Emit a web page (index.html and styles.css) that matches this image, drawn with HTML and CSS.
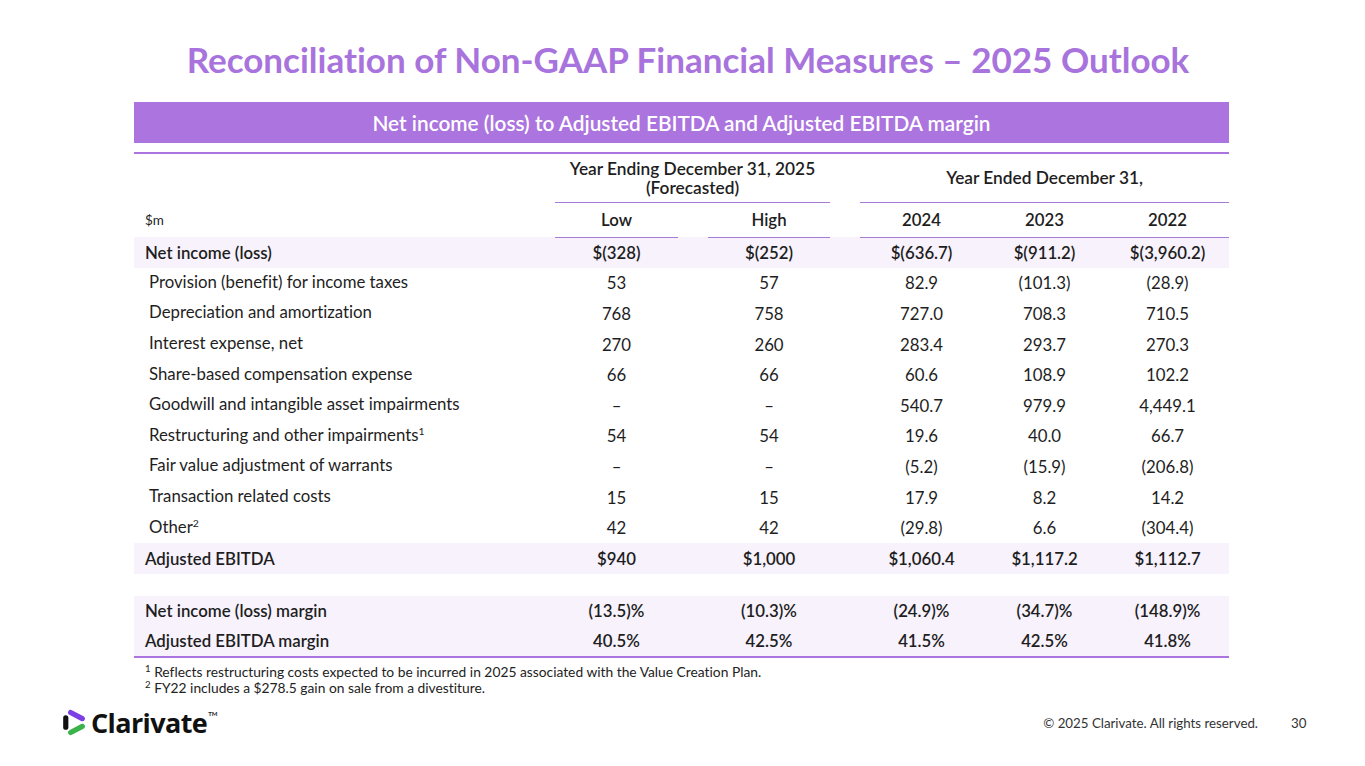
FILE: index.html
```html
<!DOCTYPE html>
<html lang="en">
<head>
<meta charset="utf-8">
<title>Reconciliation of Non-GAAP Financial Measures – 2025 Outlook</title>
<link rel="stylesheet" href="styles.css">
</head>
<body>
<div class="slide">
  <h1 class="title">Reconciliation of Non-GAAP Financial Measures – 2025 Outlook</h1>
  <section class="panel">
    <div class="bar">Net income (loss) to Adjusted EBITDA and Adjusted EBITDA margin</div>
    <table class="recon">
      <colgroup>
        <col class="c-label"><col class="c-num"><col class="c-gap"><col class="c-num2"><col class="c-gap"><col class="c-num"><col class="c-num"><col class="c-num">
      </colgroup>
      <thead>
        <tr class="h1">
          <th></th>
          <th colspan="3" class="grp">Year Ending December 31, 2025<br>(Forecasted)</th>
          <th></th>
          <th colspan="3" class="grp">Year Ended December 31,</th>
        </tr>
        <tr class="h2">
          <th class="unit">$m</th>
          <th class="yr">Low</th>
          <th></th>
          <th class="yr">High</th>
          <th></th>
          <th class="yr">2024</th>
          <th class="yr">2023</th>
          <th class="yr">2022</th>
        </tr>
      </thead>
      <tbody>
        <tr class="shade strong"><td class="lbl">Net income (loss)</td><td>$(328)</td><td></td><td>$(252)</td><td></td><td>$(636.7)</td><td>$(911.2)</td><td>$(3,960.2)</td></tr>
        <tr><td class="lbl sub">Provision (benefit) for income taxes</td><td>53</td><td></td><td>57</td><td></td><td>82.9</td><td>(101.3)</td><td>(28.9)</td></tr>
        <tr><td class="lbl sub">Depreciation and amortization</td><td>768</td><td></td><td>758</td><td></td><td>727.0</td><td>708.3</td><td>710.5</td></tr>
        <tr><td class="lbl sub">Interest expense, net</td><td>270</td><td></td><td>260</td><td></td><td>283.4</td><td>293.7</td><td>270.3</td></tr>
        <tr><td class="lbl sub">Share-based compensation expense</td><td>66</td><td></td><td>66</td><td></td><td>60.6</td><td>108.9</td><td>102.2</td></tr>
        <tr><td class="lbl sub">Goodwill and intangible asset impairments</td><td>–</td><td></td><td>–</td><td></td><td>540.7</td><td>979.9</td><td>4,449.1</td></tr>
        <tr><td class="lbl sub">Restructuring and other impairments<sup>1</sup></td><td>54</td><td></td><td>54</td><td></td><td>19.6</td><td>40.0</td><td>66.7</td></tr>
        <tr><td class="lbl sub">Fair value adjustment of warrants</td><td>–</td><td></td><td>–</td><td></td><td>(5.2)</td><td>(15.9)</td><td>(206.8)</td></tr>
        <tr><td class="lbl sub">Transaction related costs</td><td>15</td><td></td><td>15</td><td></td><td>17.9</td><td>8.2</td><td>14.2</td></tr>
        <tr><td class="lbl sub">Other<sup>2</sup></td><td>42</td><td></td><td>42</td><td></td><td>(29.8)</td><td>6.6</td><td>(304.4)</td></tr>
        <tr class="shade strong"><td class="lbl">Adjusted EBITDA</td><td>$940</td><td></td><td>$1,000</td><td></td><td>$1,060.4</td><td>$1,117.2</td><td>$1,112.7</td></tr>
        <tr class="spacer"><td colspan="8"></td></tr>
        <tr class="shade strong"><td class="lbl">Net income (loss) margin</td><td>(13.5)%</td><td></td><td>(10.3)%</td><td></td><td>(24.9)%</td><td>(34.7)%</td><td>(148.9)%</td></tr>
        <tr class="shade strong last"><td class="lbl">Adjusted EBITDA margin</td><td>40.5%</td><td></td><td>42.5%</td><td></td><td>41.5%</td><td>42.5%</td><td>41.8%</td></tr>
      </tbody>
    </table>
    <div class="notes">
      <p><sup>1</sup> Reflects restructuring costs expected to be incurred in 2025 associated with the Value Creation Plan.</p>
      <p><sup>2</sup> FY22 includes a $278.5 gain on sale from a divestiture.</p>
    </div>
  </section>
  <footer class="footer">
    <div class="logo">
      <svg class="logo-mark" viewBox="0 0 24 26" width="25" height="27" aria-hidden="true">
        <path d="M3.6 8.5 L3.6 17.5" stroke="#111" stroke-width="5" stroke-linecap="round" fill="none"/>
        <path d="M8.3 3.3 L19.5 9.3" stroke="#7b3fe4" stroke-width="5" stroke-linecap="round" fill="none"/>
        <path d="M8.3 22.7 L19.5 16.7" stroke="#3bb34a" stroke-width="5" stroke-linecap="round" fill="none"/>
      </svg>
      <span class="logo-word">Clarivate</span><span class="tm">TM</span>
    </div>
    <div class="legal">© 2025 Clarivate. All rights reserved.</div>
    <div class="page">30</div>
  </footer>
</div>
</body>
</html>
```
FILE: styles.css
```css
* { box-sizing: border-box; }
html, body { margin: 0; padding: 0; background: #fff; }
body {
  font-family: Lato, "Open Sans", Arial, sans-serif;
  color: #1e1e1e;
  font-variant-ligatures: none;
  font-feature-settings: "liga" 0;
}

.slide {
  width: 1365px;
  height: 766px;
  display: flex;
  flex-direction: column;
  overflow: hidden;
}

.title {
  margin: 0;
  padding: 37px 0 0 11px;
  height: 102px;
  text-align: center;
  font-size: 35px;
  line-height: 44px;
  font-weight: 700;
  color: #a873dc;
}

.panel {
  margin-left: 134px;
  width: 1095px;
}

.bar {
  height: 41px;
  background: #ac74de;
  color: #fff;
  font-size: 20.8px;
  font-weight: 600;
  text-align: center;
  line-height: 41px;
}

.recon {
  margin-top: 9px;
  width: 1095px;
  border-collapse: collapse;
  table-layout: fixed;
  border-top: 2px solid #ac74de;
  font-size: 16.8px;
}
.c-label { width: 421px; }
.c-num { width: 123px; }
.c-num2 { width: 122px; }
.c-gap { width: 30px; }

.recon th, .recon td { padding: 0; text-align: center; }

.h1 th { height: 49px; font-weight: 600; font-size: 17.3px; line-height: 19px; vertical-align: middle; }
.h1 .grp { border-bottom: 1px solid #a67bd8; }
.h2 th { height: 35px; font-weight: 600; font-size: 16.8px; vertical-align: middle; }
.h2 .yr { border-bottom: 1px solid #a67bd8; }
.h2 .unit { text-align: left; padding-left: 11px; font-weight: 400; font-size: 13.5px; }

.recon td { height: 30.6px; vertical-align: middle; }
.recon td.lbl { text-align: left; padding-left: 11px; }
.recon td.sub { padding-left: 15px; padding-bottom: 3px; }
.strong td { font-weight: 600; }
.shade td { background: #f7f2fc; }
.spacer td { height: 22px; background: none; }
.last td { border-bottom: 2px solid #ac74de; }

sup { font-size: 0.62em; line-height: 0; vertical-align: 0.6em; }

.notes { padding: 6px 0 0 11px; font-size: 13.8px; line-height: 16px; color: #222; }
.notes p { margin: 0; }
.notes sup { font-size: 0.7em; vertical-align: 0.5em; }

.footer {
  margin-top: auto;
  height: 58px;
  display: flex;
  align-items: flex-start;
  padding: 0 0 0 62px;
}
.logo { display: flex; align-items: center; height: 28px; }
.logo-mark { display: block; margin-right: 4px; }
.logo-word { font-family: "Open Sans", Arial, sans-serif; font-weight: 700; font-size: 27px; color: #111; letter-spacing: -0.6px; }
.tm { font-size: 6px; font-weight: 700; align-self: flex-start; margin-top: 2px; margin-left: 1px; }
.legal { margin-left: auto; font-size: 13.3px; color: #333; padding-top: 7px; }
.page { width: 107px; padding-left: 33px; font-size: 13.3px; color: #333; padding-top: 7px; }
```
